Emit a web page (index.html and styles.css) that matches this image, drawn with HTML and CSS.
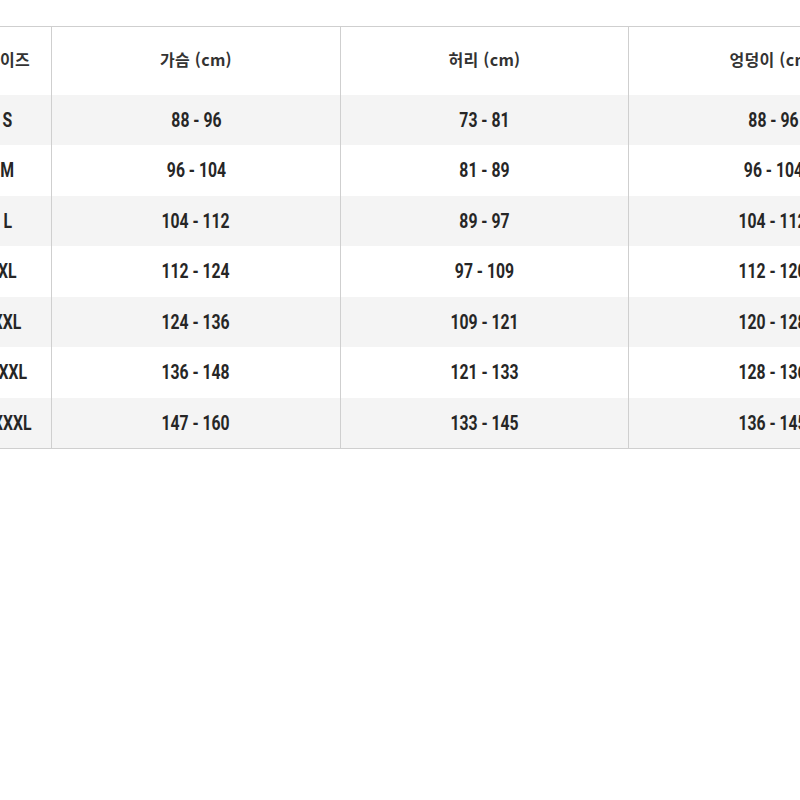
FILE: index.html
```html
<!DOCTYPE html>
<html lang="ko">
<head>
<meta charset="utf-8">
<link rel="stylesheet" href="styles.css">
</head>
<body>
<div class="viewport">
  <table class="chart">
    <thead>
      <tr><th>사이즈</th><th>가슴 (cm)</th><th>허리 (cm)</th><th>엉덩이 (cm)</th></tr>
    </thead>
    <tbody>
      <tr><td><span>S</span></td><td><span>88 - 96</span></td><td><span>73 - 81</span></td><td><span>88 - 96</span></td></tr>
      <tr><td><span>M</span></td><td><span>96 - 104</span></td><td><span>81 - 89</span></td><td><span>96 - 104</span></td></tr>
      <tr><td><span>L</span></td><td><span>104 - 112</span></td><td><span>89 - 97</span></td><td><span>104 - 112</span></td></tr>
      <tr><td><span>XL</span></td><td><span>112 - 124</span></td><td><span>97 - 109</span></td><td><span>112 - 120</span></td></tr>
      <tr><td><span>XXL</span></td><td><span>124 - 136</span></td><td><span>109 - 121</span></td><td><span>120 - 128</span></td></tr>
      <tr><td><span>XXXL</span></td><td><span>136 - 148</span></td><td><span>121 - 133</span></td><td><span>128 - 136</span></td></tr>
      <tr><td><span>XXXXL</span></td><td><span>147 - 160</span></td><td><span>133 - 145</span></td><td><span>136 - 145</span></td></tr>
    </tbody>
  </table>
</div>
</body>
</html>
```

FILE: styles.css
```css
html, body {
  margin: 0;
  padding: 0;
  background: #ffffff;
}
.viewport {
  width: 800px;
  height: 800px;
  overflow: hidden;
  padding-top: 26px;
  box-sizing: border-box;
}
.chart {
  margin-left: -36px;
  border-collapse: collapse;
  table-layout: fixed;
  width: 953px;
  color: #2a2a2a;
}
.chart th, .chart td {
  text-align: center;
  vertical-align: middle;
  padding: 0;
  border-left: 1px solid #cfcfcf;
  border-right: 1px solid #cfcfcf;
}
.chart th:first-child, .chart td:first-child { width: 87px; border-left: none; }
.chart th:nth-child(2), .chart td:nth-child(2) { width: 288px; }
.chart th:nth-child(3), .chart td:nth-child(3) { width: 287px; }
.chart th:nth-child(4), .chart td:nth-child(4) { width: 288px; }
.chart thead tr {
  border-top: 1px solid #cfcfcf;
  height: 68px;
}
.chart th {
  font-family: "Noto Sans CJK KR", "Noto Sans", sans-serif;
  font-weight: 700;
  font-size: 16px;
  color: #333333;
  letter-spacing: 0.3px;
  padding-bottom: 3px;
}
.chart tbody tr { height: 50.5px; }
.chart tbody tr:nth-child(odd) { background: #f4f4f4; }
.chart tbody tr:last-child { border-bottom: 1px solid #cfcfcf; }
.chart td {
  font-family: Roboto, "DejaVu Sans", sans-serif;
  font-weight: 700;
  font-size: 21px;
  color: #262626;
}
.chart td span {
  display: inline-block;
  transform: scaleX(0.75);
  white-space: nowrap;
}
```
